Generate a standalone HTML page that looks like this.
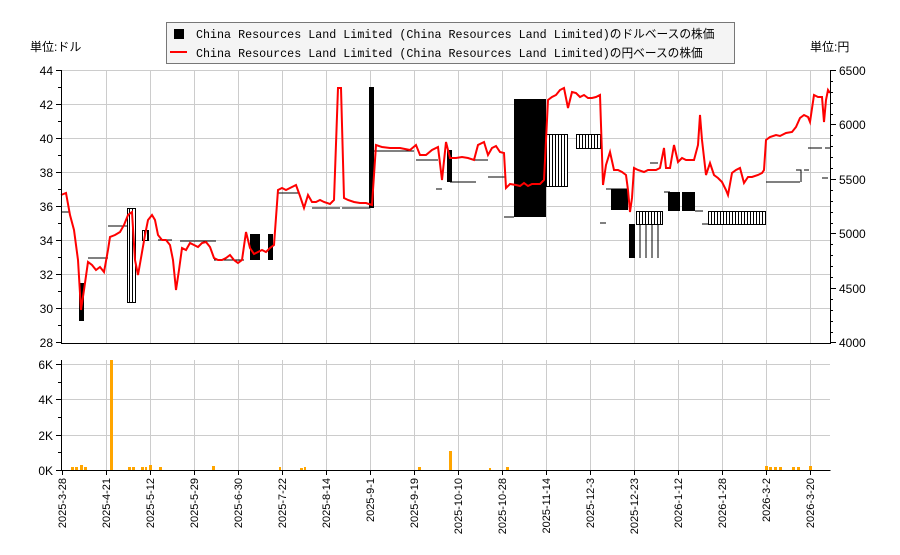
<!DOCTYPE html><html><head><meta charset="utf-8"><style>
body{margin:0;background:#fff;width:900px;height:550px;overflow:hidden;font-family:"Liberation Sans","Noto Sans CJK JP",sans-serif}
</style></head><body>
<svg width="900" height="550" xmlns="http://www.w3.org/2000/svg" font-family="Liberation Sans, Noto Sans CJK JP, sans-serif" font-size="12">
<g stroke="#ccc" stroke-width="1">
<line x1="61" y1="104.5" x2="830" y2="104.5"/><line x1="61" y1="138.5" x2="830" y2="138.5"/><line x1="61" y1="172.5" x2="830" y2="172.5"/><line x1="61" y1="206.5" x2="830" y2="206.5"/><line x1="61" y1="240.5" x2="830" y2="240.5"/><line x1="61" y1="274.5" x2="830" y2="274.5"/><line x1="61" y1="308.5" x2="830" y2="308.5"/><line x1="61" y1="70.5" x2="830" y2="70.5"/>
<line x1="61" y1="364.5" x2="830" y2="364.5"/><line x1="61" y1="399.5" x2="830" y2="399.5"/><line x1="61" y1="435.5" x2="830" y2="435.5"/>
<path d="M106.5 70V343M150.5 70V343M194.5 70V343M238.5 70V343M282.5 70V343M326.5 70V343M370.5 70V343M414.5 70V343M458.5 70V343M502.5 70V343M546.5 70V343M590.5 70V343M634.5 70V343M678.5 70V343M722.5 70V343M766.5 70V343M810.5 70V343"/>
<path d="M106.5 360V470M150.5 360V470M194.5 360V470M238.5 360V470M282.5 360V470M326.5 360V470M370.5 360V470M414.5 360V470M458.5 360V470M502.5 360V470M546.5 360V470M590.5 360V470M634.5 360V470M678.5 360V470M722.5 360V470M766.5 360V470M810.5 360V470"/>
</g>
<g fill="#000">
<rect x="514" y="99" width="32" height="118"/>
<rect x="369" y="87" width="5" height="121"/>
<rect x="79" y="283" width="5" height="38"/>
<rect x="611" y="189" width="17" height="21"/>
<rect x="668" y="192" width="12" height="19"/>
<rect x="682" y="192" width="13" height="19"/>
<rect x="629" y="224" width="6" height="34"/>
<rect x="250" y="234" width="10" height="26"/>
<rect x="268" y="234" width="5" height="26"/>
<rect x="447" y="150" width="5" height="32"/>
</g>
<defs><pattern id="h" width="3" height="4" patternUnits="userSpaceOnUse"><rect width="3" height="4" fill="#fff"/><rect width="1" height="4" fill="#000"/></pattern></defs>
<g fill="url(#h)" stroke="#000" stroke-width="1">
<rect x="546.5" y="134.5" width="21" height="52"/>
<rect x="576.5" y="134.5" width="24" height="14"/>
<rect x="636.5" y="211.5" width="26" height="13"/>
<rect x="708.5" y="211.5" width="57" height="13"/>
<rect x="127.5" y="208.5" width="8" height="94"/>
<rect x="142.5" y="230.5" width="6" height="10"/>
</g>
<g stroke="#000" stroke-width="1" fill="none">
<path d="M61 212h9M88 258h20M108 226h20M158 240h14M180 241h36M214 260h30M278 193h20M312 208h28M342 208h28M374 151h40M416 160h22M436 189h6M450 182h26M474 160h14M488 177h18M504 217h10M600 223h6M606 189h22M650 163h8M664 192h6M702 224h6M695 211h8M766 182h34M796 170h5v12M804 170h5M808 148h14M822 178h6M825 148h5"/>
<path d="M640 224v34M646 224v34M652 224v34M658 224v34"/>
</g>
<polyline fill="none" stroke="#f00" stroke-width="2" points="61,195 66,193 70,215 74,230 78,260 81,310 84,290 88,262 92,265 96,270 100,267 104,272 108,250 110,237 115,235 120,232 124,225 128,215 132,212 135,260 138,275 141,258 145,235 148,220 152,215 155,220 158,235 162,240 166,240 170,245 173,260 176,290 179,270 182,248 186,250 190,243 194,245 198,247 202,243 206,242 210,247 214,258 218,260 222,260 226,258 230,255 234,260 238,263 242,260 246,232 250,248 254,254 258,252 262,250 266,252 270,248 274,245 278,190 282,188 286,190 290,188 296,185 300,196 304,208 308,195 312,202 316,202 320,200 324,202 330,204 334,200 338,88 341,88 344,198 348,200 354,202 360,203 366,203 372,205 376,145 382,147 390,148 400,148 410,150 416,145 420,155 426,155 432,150 438,147 442,180 446,142 450,158 456,158 462,157 468,158 474,160 478,145 484,142 488,155 492,148 496,146 500,152 504,153 506,188 510,184 516,185 520,186 524,183 528,186 532,184 540,184 544,180 548,100 552,97 556,95 560,90 564,88 568,108 572,92 576,93 580,97 584,95 588,98 592,98 596,97 600,95 603,185 606,165 610,152 614,170 618,170 622,172 626,175 628,190 630,212 632,198 634,168 638,170 644,172 648,170 656,170 660,168 664,148 666,168 670,168 674,145 678,162 682,158 686,160 690,160 694,160 698,145 700,115 702,140 706,175 710,163 714,175 718,178 722,182 726,190 728,195 732,173 736,170 740,168 744,183 748,177 752,177 758,175 762,173 764,170 766,140 770,137 776,135 780,136 786,133 792,132 796,127 800,118 804,115 808,117 810,122 814,95 818,97 822,97 824,122 826,100 828,90 830,93"/>
<g fill="#FFA500">
<rect x="71" y="467" width="3" height="3"/><rect x="75" y="467" width="3" height="3"/><rect x="80" y="465" width="3" height="5"/><rect x="84" y="467" width="3" height="3"/>
<rect x="110" y="360" width="3" height="110"/>
<rect x="128" y="467" width="3" height="3"/><rect x="132" y="467" width="3" height="3"/><rect x="141" y="467" width="3" height="3"/><rect x="145" y="467" width="2" height="3"/><rect x="149" y="465" width="3" height="5"/><rect x="159" y="467" width="3" height="3"/>
<rect x="212" y="466" width="3" height="4"/><rect x="279" y="467" width="2" height="3"/><rect x="300" y="468" width="3" height="2"/><rect x="304" y="467" width="2" height="3"/><rect x="418" y="467" width="3" height="3"/>
<rect x="449" y="451" width="3" height="19"/><rect x="489" y="468" width="2" height="2"/><rect x="506" y="467" width="3" height="3"/>
<rect x="765" y="466" width="3" height="4"/><rect x="769" y="467" width="3" height="3"/><rect x="774" y="467" width="3" height="3"/><rect x="779" y="467" width="3" height="3"/><rect x="792" y="467" width="3" height="3"/><rect x="797" y="467" width="3" height="3"/><rect x="809" y="466" width="3" height="4"/>
</g>
<g stroke="#000" stroke-width="1" fill="none">
<path d="M61.5 70v273.5H830.5V70"/>
<path d="M61.5 360v110.5H830.5"/>
<path d="M56 70.5h5M56 104.5h5M56 138.5h5M56 172.5h5M56 206.5h5M56 240.5h5M56 274.5h5M56 308.5h5M56 342.5h5M58 87.5h3M58 121.5h3M58 155.5h3M58 189.5h3M58 223.5h3M58 257.5h3M58 291.5h3M58 325.5h3"/>
<path d="M830 70.5h6M830 124.5h6M830 179.5h6M830 233.5h6M830 288.5h6M830 342.5h6M830 81.5h3M830 92.5h3M830 103.5h3M830 114.5h3M830 135.5h3M830 146.5h3M830 157.5h3M830 168.5h3M830 190.5h3M830 201.5h3M830 212.5h3M830 223.5h3M830 244.5h3M830 255.5h3M830 266.5h3M830 277.5h3M830 299.5h3M830 310.5h3M830 321.5h3M830 332.5h3"/>
<path d="M56 364.5h5M56 399.5h5M56 435.5h5M56 470.5h5M58 382.5h3M58 417.5h3M58 452.5h3"/>
<path d="M62.5 470v5M106.5 470v5M150.5 470v5M194.5 470v5M238.5 470v5M282.5 470v5M326.5 470v5M370.5 470v5M414.5 470v5M458.5 470v5M502.5 470v5M546.5 470v5M590.5 470v5M634.5 470v5M678.5 470v5M722.5 470v5M766.5 470v5M810.5 470v5"/>
</g>
<g font-size="12" fill="#000" text-anchor="end">
<text x="53" y="75">44</text><text x="53" y="109">42</text><text x="53" y="143">40</text><text x="53" y="177">38</text><text x="53" y="211">36</text><text x="53" y="245">34</text><text x="53" y="279">32</text><text x="53" y="313">30</text><text x="53" y="347">28</text>
<text x="53" y="369">6K</text><text x="53" y="404">4K</text><text x="53" y="440">2K</text><text x="53" y="475">0K</text>
</g>
<g font-size="12" fill="#000">
<text x="839" y="75">6500</text><text x="839" y="129">6000</text><text x="839" y="184">5500</text><text x="839" y="238">5000</text><text x="839" y="293">4500</text><text x="839" y="347">4000</text>
<text x="30" y="51">単位:ドル</text><text x="810" y="51">単位:円</text>
</g>
<g font-size="11" fill="#000" text-anchor="end">
<text transform="translate(66,478) rotate(-90)">2025-3-28</text>
<text transform="translate(110,478) rotate(-90)">2025-4-21</text>
<text transform="translate(154,478) rotate(-90)">2025-5-12</text>
<text transform="translate(198,478) rotate(-90)">2025-5-29</text>
<text transform="translate(242,478) rotate(-90)">2025-6-30</text>
<text transform="translate(286,478) rotate(-90)">2025-7-22</text>
<text transform="translate(330,478) rotate(-90)">2025-8-14</text>
<text transform="translate(374,478) rotate(-90)">2025-9-1</text>
<text transform="translate(418,478) rotate(-90)">2025-9-19</text>
<text transform="translate(462,478) rotate(-90)">2025-10-10</text>
<text transform="translate(506,478) rotate(-90)">2025-10-28</text>
<text transform="translate(550,478) rotate(-90)">2025-11-14</text>
<text transform="translate(594,478) rotate(-90)">2025-12-3</text>
<text transform="translate(638,478) rotate(-90)">2025-12-23</text>
<text transform="translate(682,478) rotate(-90)">2026-1-12</text>
<text transform="translate(726,478) rotate(-90)">2026-1-28</text>
<text transform="translate(770,478) rotate(-90)">2026-3-2</text>
<text transform="translate(814,478) rotate(-90)">2026-3-20</text>
</g>
<rect x="166.5" y="22.5" width="568" height="41" fill="#f4f4f4" stroke="#777"/>
<rect x="174" y="29" width="10" height="10" fill="#000"/>
<line x1="170" y1="52" x2="187" y2="52" stroke="#f00" stroke-width="2"/>
<g font-family="Liberation Mono, Noto Sans CJK JP, monospace" font-size="11.7" fill="#000">
<text x="196" y="38">China Resources Land Limited (China Resources Land Limited)のドルベースの株価</text>
<text x="196" y="57">China Resources Land Limited (China Resources Land Limited)の円ベースの株価</text>
</g>
</svg>
</body></html>
